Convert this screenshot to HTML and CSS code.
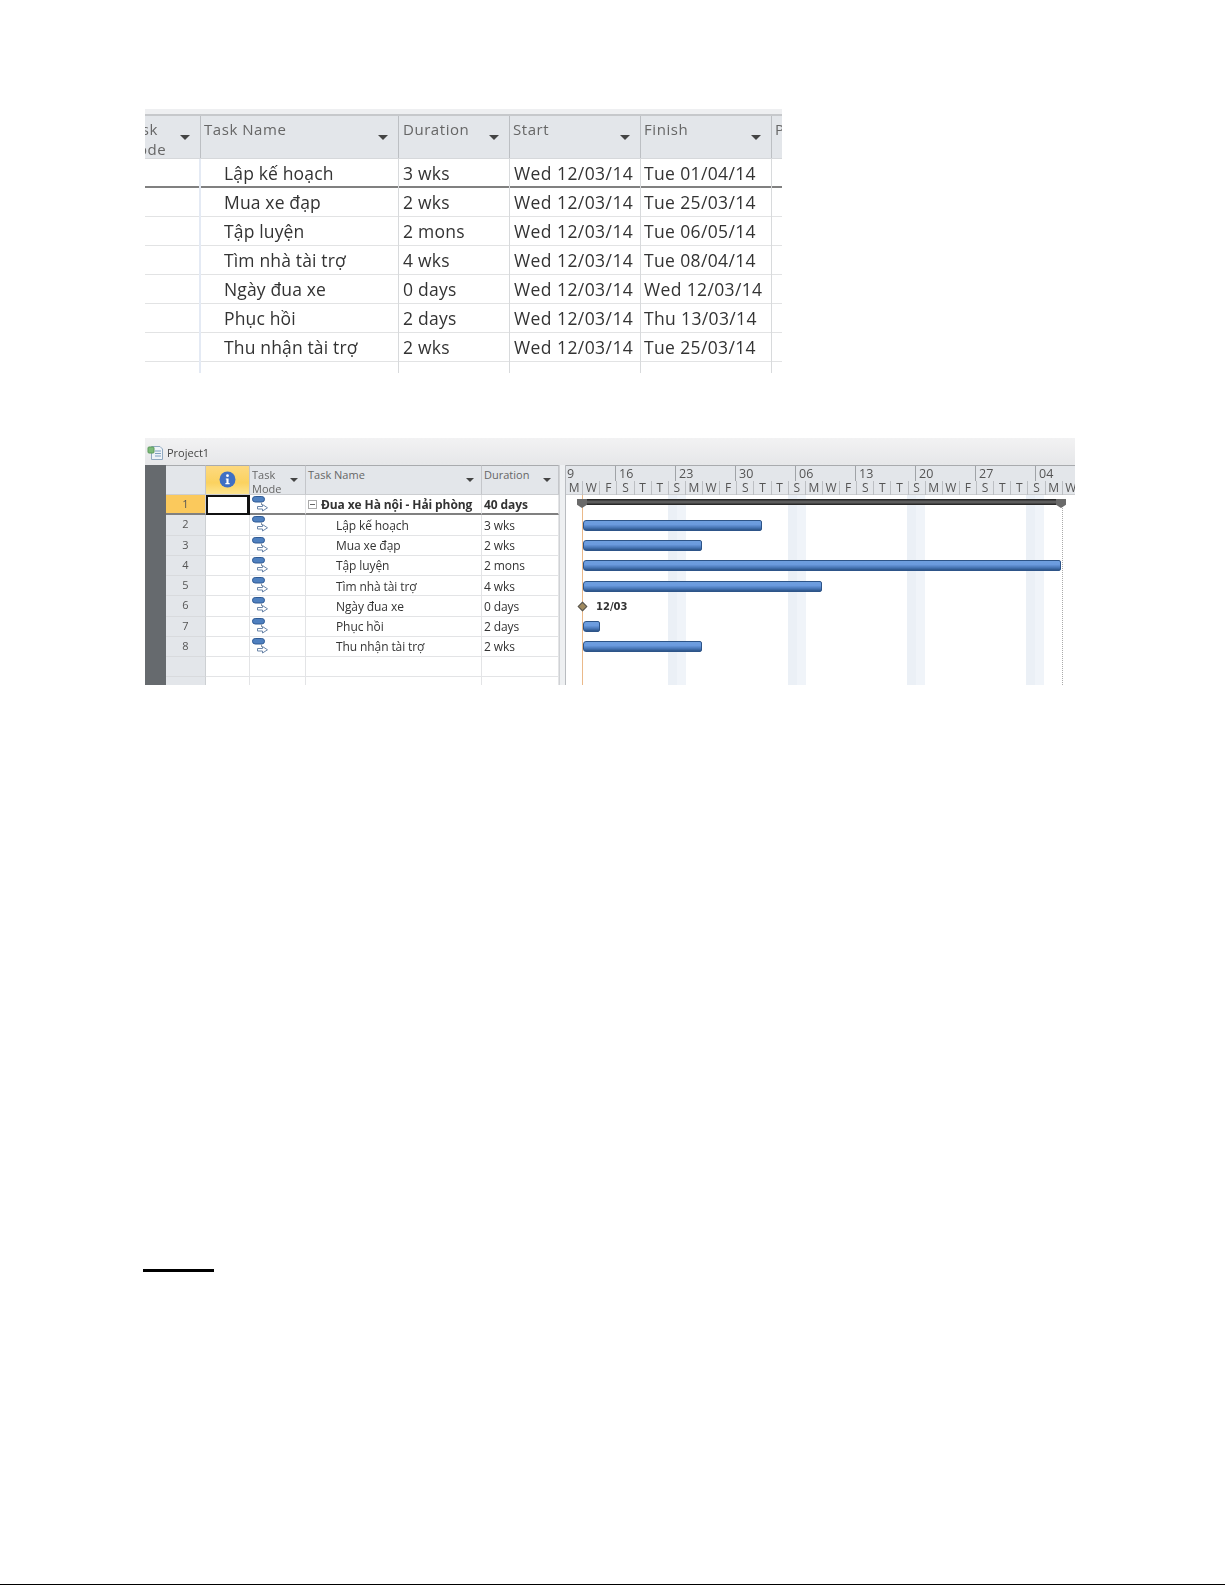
FILE: index.html
```html
<!DOCTYPE html>
<html lang="vi">
<head>
<meta charset="utf-8">
<title>Project1</title>
<link rel="stylesheet" href="styles.css">
</head>
<body>
<svg class="defs" width="0" height="0" aria-hidden="true">
  <symbol id="mode" viewBox="0 0 17 16">
    <rect x="0.5" y="0.5" width="12" height="5.5" rx="2.7" fill="#4f80bf" stroke="#2f5a94"/>
    <path d="M9.5 6.5V9" stroke="#8a96a4" fill="none"/>
    <path d="M5.5 10.5H10.5V8.5L15.5 11.8L10.5 15V13H5.5Z" fill="#fff" stroke="#6a85a8"/>
  </symbol>
</svg>
<main class="page">
  <section class="shot-a">
    <div class="strip-a"></div>
    <div class="table-a head">
      <div class="hc"><span class="clip-mode">Task<br>Mode</span><i class="arrow"></i></div>
      <div class="hc"><span>Task Name</span><i class="arrow"></i></div>
      <div class="hc"><span>Duration</span><i class="arrow"></i></div>
      <div class="hc"><span>Start</span><i class="arrow"></i></div>
      <div class="hc"><span>Finish</span><i class="arrow"></i></div>
      <div class="hc end"><span>Predecessors</span></div>
    </div>
    <div class="table-a row first"><div></div><div class="name">Lập kế hoạch</div><div>3 wks</div><div>Wed 12/03/14</div><div>Tue 01/04/14</div><div></div></div>
    <div class="table-a row"><div></div><div class="name">Mua xe đạp</div><div>2 wks</div><div>Wed 12/03/14</div><div>Tue 25/03/14</div><div></div></div>
    <div class="table-a row"><div></div><div class="name">Tập luyện</div><div>2 mons</div><div>Wed 12/03/14</div><div>Tue 06/05/14</div><div></div></div>
    <div class="table-a row"><div></div><div class="name">Tìm nhà tài trợ</div><div>4 wks</div><div>Wed 12/03/14</div><div>Tue 08/04/14</div><div></div></div>
    <div class="table-a row"><div></div><div class="name">Ngày đua xe</div><div>0 days</div><div>Wed 12/03/14</div><div>Wed 12/03/14</div><div></div></div>
    <div class="table-a row"><div></div><div class="name">Phục hồi</div><div>2 days</div><div>Wed 12/03/14</div><div>Thu 13/03/14</div><div></div></div>
    <div class="table-a row"><div></div><div class="name">Thu nhận tài trợ</div><div>2 wks</div><div>Wed 12/03/14</div><div>Tue 25/03/14</div><div></div></div>
    <div class="table-a row"><div></div><div></div><div></div><div></div><div></div><div></div></div>
  </section>

  <section class="shot-b">
    <div class="titlebar">
      <svg class="doc" width="17" height="17" viewBox="0 0 17 17">
        <path d="M4.5 2.5H13L15.5 5V15.5H4.5Z" fill="#eef3f8" stroke="#8fa8c0"/>
        <rect x="1" y="3" width="6" height="6" rx="1" fill="#7dbb78" stroke="#5c9a5c"/>
        <path d="M8 7H14M8 9.5H14M8 12H14" stroke="#7fa0c0" fill="none"/>
      </svg>
      <span>Project1</span>
    </div>
    <div class="sheet">
      <div class="side"></div>
      <div class="grid-b">
        <div class="gh"></div>
        <div class="gh info">
          <svg width="17" height="17" viewBox="0 0 16 16"><circle cx="8" cy="8" r="7.5" fill="#3f6fc4"/><circle cx="8" cy="4.4" r="1.3" fill="#fff"/><path d="M6.4 7H9V11.4H10V12.4H6V11.4H7V8H6.4Z" fill="#fff"/></svg>
        </div>
        <div class="gh"><span>Task<br>Mode</span><i class="arrow small"></i></div>
        <div class="gh"><span>Task Name</span><i class="arrow small"></i></div>
        <div class="gh"><span>Duration</span><i class="arrow small"></i></div>

        <div class="num sel">1</div><div class="cell picked"></div><div class="cell ic first-row"><svg width="17" height="16"><use href="#mode"/></svg></div><div class="cell strong"><i class="minus"></i>Đua xe Hà nội - Hải phòng</div><div class="cell strong">40 days</div>
        <div class="num">2</div><div class="cell"></div><div class="cell ic"><svg width="17" height="16"><use href="#mode"/></svg></div><div class="cell sub">Lập kế hoạch</div><div class="cell">3 wks</div>
        <div class="num">3</div><div class="cell"></div><div class="cell ic"><svg width="17" height="16"><use href="#mode"/></svg></div><div class="cell sub">Mua xe đạp</div><div class="cell">2 wks</div>
        <div class="num">4</div><div class="cell"></div><div class="cell ic"><svg width="17" height="16"><use href="#mode"/></svg></div><div class="cell sub">Tập luyện</div><div class="cell">2 mons</div>
        <div class="num">5</div><div class="cell"></div><div class="cell ic"><svg width="17" height="16"><use href="#mode"/></svg></div><div class="cell sub">Tìm nhà tài trợ</div><div class="cell">4 wks</div>
        <div class="num">6</div><div class="cell"></div><div class="cell ic"><svg width="17" height="16"><use href="#mode"/></svg></div><div class="cell sub">Ngày đua xe</div><div class="cell">0 days</div>
        <div class="num">7</div><div class="cell"></div><div class="cell ic"><svg width="17" height="16"><use href="#mode"/></svg></div><div class="cell sub">Phục hồi</div><div class="cell">2 days</div>
        <div class="num">8</div><div class="cell"></div><div class="cell ic"><svg width="17" height="16"><use href="#mode"/></svg></div><div class="cell sub">Thu nhận tài trợ</div><div class="cell">2 wks</div>
        <div class="num"></div><div class="cell"></div><div class="cell"></div><div class="cell"></div><div class="cell"></div>
        <div class="num"></div><div class="cell"></div><div class="cell"></div><div class="cell"></div><div class="cell"></div>
      </div>
      <div class="splitter"></div>
      <div class="gantt">
        <div class="weeks">
          <div class="wk first">9</div><div class="wk">16</div><div class="wk">23</div><div class="wk">30</div><div class="wk">06</div><div class="wk">13</div><div class="wk">20</div><div class="wk">27</div><div class="wk">04</div>
        </div>
        <div class="days">
          <div>M</div><div>W</div><div>F</div><div>S</div><div>T</div><div>T</div><div>S</div>
          <div>M</div><div>W</div><div>F</div><div>S</div><div>T</div><div>T</div><div>S</div>
          <div>M</div><div>W</div><div>F</div><div>S</div><div>T</div><div>T</div><div>S</div>
          <div>M</div><div>W</div><div>F</div><div>S</div><div>T</div><div>T</div><div>S</div>
          <div>M</div><div>W</div>
        </div>
        <div class="chart">
          <i class="shade s1"></i><i class="shade s2"></i><i class="shade s3"></i><i class="shade s4"></i>
          <i class="today"></i><i class="finish"></i>
          <div class="lane top"><div class="summary"><i class="cap l"></i><i class="cap r"></i></div></div>
          <div class="lane"><div class="bar" style="width:179px"></div></div>
          <div class="lane"><div class="bar" style="width:119px"></div></div>
          <div class="lane"><div class="bar" style="width:478px"></div></div>
          <div class="lane"><div class="bar" style="width:239px"></div></div>
          <div class="lane ms"><i class="diamond"></i><span>12/03</span></div>
          <div class="lane"><div class="bar" style="width:17px"></div></div>
          <div class="lane"><div class="bar" style="width:119px"></div></div>
        </div>
      </div>
    </div>
  </section>

  <div class="rule"></div>
  <div class="foot"></div>
</main>
</body>
</html>
```
FILE: styles.css
```css
* { box-sizing: border-box; }
html, body { margin: 0; padding: 0; background: #fff; }
.defs { position: absolute; }
.page {
  height: 1585px;
  padding: 109px 0 0 145px;
  display: flex;
  flex-direction: column;
  font-family: "Open Sans", "Noto Sans", sans-serif;
  overflow: hidden;
}

/* first screenshot */
.shot-a {
  width: 637px;
  height: 264px;
  overflow: hidden;
  flex: none;
  color: #333;
  filter: blur(0.5px);
}
.strip-a { height: 5px; background: #eeeff1; }
.table-a { display: grid; grid-template-columns: 56px 198px 111px 131px 131px 10px; }
.head { height: 45px; background: #e3e6ea; border-top: 2px solid #c6c8cb; border-bottom: 1px solid #d6d8db; }
.hc {
  position: relative;
  border-right: 1px solid #bcbfc3;
  padding: 3px 0 0 3px;
  font-size: 15px;
  line-height: 20px;
  letter-spacing: 0.55px;
  color: #666;
  white-space: nowrap;
  overflow: hidden;
}
.hc:nth-child(3) { padding-left: 4px; }
.hc.end { border-right: 0; }
.clip-mode { display: block; margin-left: -24px; }
.arrow {
  position: absolute;
  right: 10px;
  top: 19px;
  border: 5px solid transparent;
  border-top: 5px solid #444;
  border-bottom: 0;
}
.row { height: 29px; border-bottom: 1px solid #e2e3e4; font-size: 17.5px; line-height: 29px; letter-spacing: 0.15px; }
.row.first { border-bottom: 2px solid #808080; height: 29px; }
.row > div { padding-left: 4px; border-right: 1px solid #d8dadc; white-space: nowrap; }
.row > div:first-child { border-right: 2px solid #e4eaf4; }
.row > div:nth-child(3) { letter-spacing: 0.25px; }
.row > div:nth-child(4) { letter-spacing: 0.43px; }
.row > div:nth-child(5) { padding-left: 3px; letter-spacing: 0.36px; }
.row > div:last-child { border-right: 0; }
.row > .name { padding-left: 23px; }

/* second screenshot */
.shot-b {
  margin-top: 65px;
  width: 930px;
  height: 247px;
  flex: none;
  overflow: hidden;
  color: #333;
  filter: blur(0.5px);
}
.titlebar {
  height: 27px;
  display: flex;
  align-items: center;
  gap: 3px;
  padding: 2px 0 0 2px;
  font-size: 11px;
  background: linear-gradient(#f2f2f3, #e6e7e9);
  color: #444;
}
.sheet { display: flex; height: 220px; }
.side { width: 21px; flex: none; background: #666a6e; }
.grid-b {
  width: 393px;
  flex: none;
  display: grid;
  grid-template-columns: 40px 44px 56px 176px 77px;
  grid-template-rows: 30px repeat(10, 20.25px);
  font-size: 12px;
}
.gh {
  position: relative;
  background: #e3e6ea;
  border-top: 1px solid #a9abae;
  border-right: 1px solid #c4c6ca;
  border-bottom: 1px solid #ccced1;
  padding: 2px 0 0 2px;
  font-size: 11px;
  line-height: 14px;
  color: #666;
}
.gh.info {
  background: linear-gradient(#fdd980, #fbd25f 60%, #fde48e);
  display: flex;
  align-items: center;
  justify-content: center;
  padding: 0 0 2px;
}
.arrow.small { right: 7px; top: 12px; border-width: 4px; border-bottom: 0; }
.num {
  background: #e3e6ea;
  border-right: 1px solid #cdd0d3;
  border-bottom: 1px solid #d8dadd;
  text-align: center;
  font-size: 11px;
  line-height: 18px;
  color: #555;
}
.num.sel { background: #fbc95c; border-bottom: 2px solid #808080; }
.cell {
  border-right: 1px solid #e3e4e6;
  border-bottom: 1px solid #e3e4e6;
  padding: 1px 0 0 2px;
  line-height: 19px;
  white-space: nowrap;
  display: flex;
  align-items: center;
  letter-spacing: -0.1px;
}
.cell.ic { padding: 0 0 0 2px; align-items: flex-start; }
.cell.ic svg { overflow: visible; margin-top: 1px; }
.cell.ic.first-row { border-bottom: 2px solid #808080; }
.cell.sub { padding-left: 30px; }
.cell.strong { font-weight: 700; border-bottom: 2px solid #808080; }
.cell.picked { border: 2px solid #111; border-right-width: 3px; }
.minus {
  width: 9px;
  height: 9px;
  margin: 0 4px 0 0;
  border: 1px solid #aaa;
  background: linear-gradient(#666, #666) center / 5px 1px no-repeat #fff;
  flex: none;
}
.splitter {
  width: 7px;
  flex: none;
  background: #eef0f2;
  border-left: 1px solid #d0d2d5;
  border-right: 1px solid #b9bcc0;
}
.gantt { flex: 1; min-width: 0; overflow: hidden; }
.weeks { display: flex; height: 16px; background: #e3e6ea; border-top: 1px solid #a9abae; }
.wk {
  flex: none;
  width: 60px;
  border-right: 1px solid #a0a3a7;
  font-size: 12.5px;
  line-height: 15px;
  padding-left: 3px;
  color: #555;
}
.wk.first { width: 50px; padding-left: 1px; }
.days {
  display: grid;
  grid-template-columns: repeat(30, 17.14px);
  height: 14px;
  background: #e3e6ea;
  border-bottom: 1px solid #ccced1;
  font-size: 12px;
  line-height: 14px;
  text-align: center;
  color: #555;
}
.days > div { border-right: 1px solid #bcbfc3; }
.chart { position: relative; height: 190px; background: #fff; }
.shade {
  position: absolute;
  top: 0;
  bottom: 0;
  width: 18px;
  background: linear-gradient(90deg, #ebf0f6 50%, #f0f4f9 50%);
}
.s1 { left: 102px; }
.s2 { left: 222px; }
.s3 { left: 341px; }
.s4 { left: 460px; }
.today { position: absolute; left: 16px; top: 0; bottom: 0; width: 1px; background: #eab98a; }
.finish { position: absolute; left: 496px; top: 10px; bottom: 0; border-left: 1px dotted #aaa; }
.lane { position: relative; height: 20.25px; padding-left: 17px; display: flex; align-items: center; }
.bar {
  height: 11px;
  border: 1px solid #2d5488;
  border-radius: 3px 2px 2px 3px;
  background: linear-gradient(#6f9fdf, #6a9ade 40%, #4674b4 75%, #2c5488);
}
.lane.top { align-items: flex-start; }
.summary {
  position: relative;
  margin: 4px 0 0 0;
  width: 478px;
  height: 6px;
  background: linear-gradient(#1c1c1c, #6a6a6a 50%, #1c1c1c);
}
.cap {
  position: absolute;
  top: 0;
  width: 10px;
  height: 9px;
  background: #6a6a6a;
  clip-path: polygon(0 0, 100% 0, 100% 65%, 50% 100%, 0 65%);
}
.cap.l { left: -6px; }
.cap.r { right: -5px; }
.ms { padding-left: 0; }
.diamond {
  position: absolute;
  left: 13px;
  top: 7px;
  width: 7px;
  height: 7px;
  background: #a08a5e;
  border: 1px solid #555;
  transform: rotate(45deg);
}
.ms span {
  margin-left: 30px;
  font-family: "DejaVu Sans", sans-serif;
  font-weight: 700;
  font-size: 10px;
  color: #333;
}

.rule { margin-top: 584px; width: 71px; height: 3px; background: #000; flex: none; margin-left: -2px; }
.foot { margin: 312px 0 0 -145px; width: 1225px; height: 1px; background: #000; flex: none; }
```
